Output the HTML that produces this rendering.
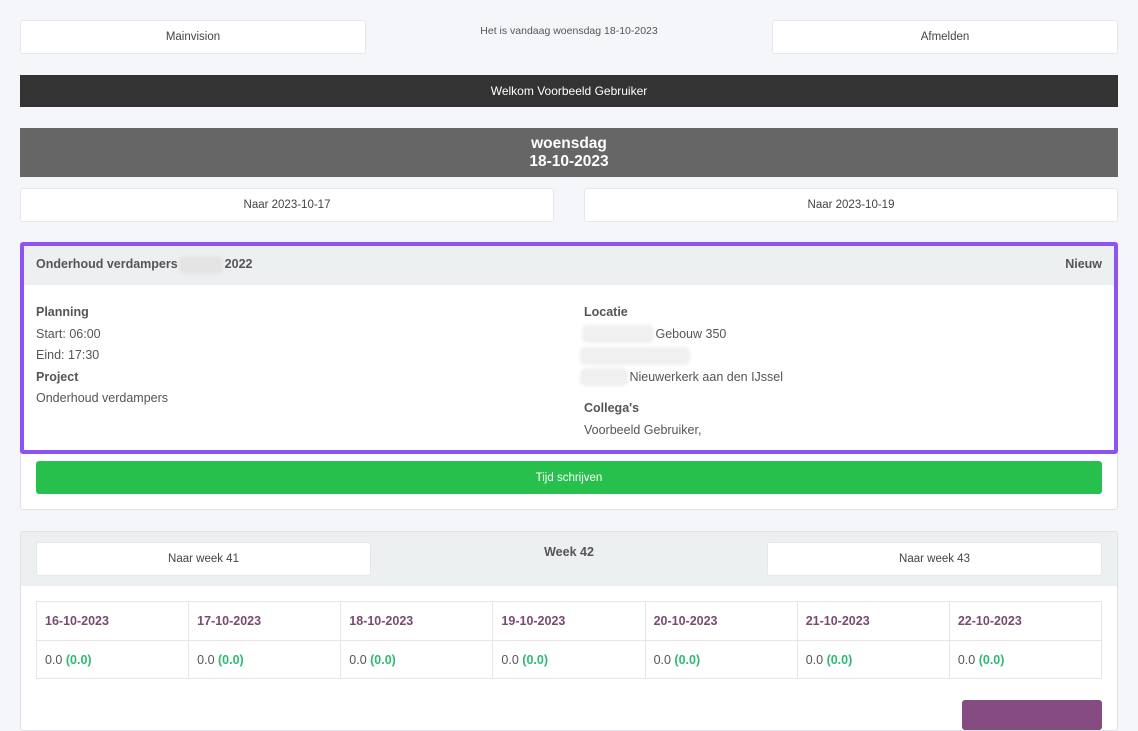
<!DOCTYPE html>
<html><head><meta charset="utf-8"><style>
*{box-sizing:border-box;margin:0;padding:0}
body{width:1138px;height:712px;overflow:hidden;background:#f5f6fa;font-family:"Liberation Sans",sans-serif;color:#555;position:relative}
.a{position:absolute}
.btn{position:absolute;background:#fff;border:1px solid #e5e7ea;border-radius:3px;font-size:11.5px;color:#444;display:flex;align-items:center;justify-content:center}
.b{font-weight:bold}
.t{font-size:12.5px;color:#555}
.blur{display:inline-block;background:#f0f0f0;height:14px;vertical-align:middle;border-radius:3px;box-shadow:0 0 3px 2px #f0f0f0}
td{border:1px solid #e6e6e6;padding:0 8px;font-size:12.5px;width:152px}
.d{color:#7a4a73;font-weight:bold;height:39px}
.v{height:38px}
.g{color:#2fba73;font-weight:600}
</style></head><body>
<div class="btn" style="left:20px;top:20px;width:346px;height:34px">Mainvision</div>
<div class="a" style="left:366px;top:25px;width:406px;text-align:center;font-size:10.5px;color:#555">Het is vandaag woensdag 18-10-2023</div>
<div class="btn" style="left:772px;top:20px;width:346px;height:34px">Afmelden</div>
<div class="a" style="left:20px;top:75px;width:1098px;height:32px;background:#333;color:#fff;font-size:12px;display:flex;align-items:center;justify-content:center">Welkom Voorbeeld Gebruiker</div>
<div class="a b" style="left:20px;top:128px;width:1098px;height:49px;background:#666;color:#fff;font-size:15.5px;text-align:center;line-height:18px;padding-top:7px">woensdag<br>18-10-2023</div>
<div class="btn" style="left:20px;top:188px;width:534px;height:34px">Naar 2023-10-17</div>
<div class="btn" style="left:584px;top:188px;width:534px;height:34px">Naar 2023-10-19</div>

<div class="a" style="left:20px;top:242px;width:1098px;height:268px;background:#fff;border:1px solid #dfe1e4;border-radius:3px"></div>
<div class="a" style="left:20px;top:242px;width:1098px;height:212px;border:4px solid #8f52f6;border-radius:3px;background:#fff"></div>
<div class="a" style="left:24px;top:246px;width:1090px;height:39px;background:#ecf0f1"></div>
<div class="a b t" style="left:36px;top:257px">Onderhoud verdampers <span class="blur" style="width:40px;background:#e4e4e4;box-shadow:0 0 3px 2px #e4e4e4"></span> 2022</div>
<div class="a b t" style="right:36px;top:257px">Nieuw</div>
<div class="a t" style="left:36px;top:302px;line-height:21.5px"><b>Planning</b><br>Start: 06:00<br>Eind: 17:30<br><b>Project</b><br>Onderhoud verdampers</div>
<div class="a t" style="left:584px;top:302px;line-height:21.5px"><b>Locatie</b><br><span class="blur" style="width:68px"></span> Gebouw 350<br><span class="blur" style="width:106px;margin-left:-2px"></span><br><span class="blur" style="width:44px;margin-left:-2px"></span> Nieuwerkerk aan den IJssel</div>
<div class="a t" style="left:584px;top:398px;line-height:21.5px"><b>Collega's</b><br>Voorbeeld Gebruiker,</div>
<div class="a" style="left:36px;top:461px;width:1066px;height:33px;background:#28c04c;border-radius:3px;color:#fff;font-size:11.5px;display:flex;align-items:center;justify-content:center">Tijd schrijven</div>

<div class="a" style="left:20px;top:531px;width:1098px;height:200px;background:#fff;border:1px solid #dfe1e4;border-radius:3px"></div>
<div class="a" style="left:21px;top:532px;width:1096px;height:54px;background:#ecf0f1"></div>
<div class="btn" style="left:36px;top:542px;width:335px;height:34px">Naar week 41</div>
<div class="a b t" style="left:371px;top:545px;width:396px;text-align:center">Week 42</div>
<div class="btn" style="left:767px;top:542px;width:335px;height:34px">Naar week 43</div>
<table class="a" style="left:36px;top:601px;width:1066px;border-collapse:collapse">
<tr><td class="d">16-10-2023</td><td class="d">17-10-2023</td><td class="d">18-10-2023</td><td class="d">19-10-2023</td><td class="d">20-10-2023</td><td class="d">21-10-2023</td><td class="d">22-10-2023</td></tr>
<tr><td class="v">0.0 <span class="g">(0.0)</span></td><td class="v">0.0 <span class="g">(0.0)</span></td><td class="v">0.0 <span class="g">(0.0)</span></td><td class="v">0.0 <span class="g">(0.0)</span></td><td class="v">0.0 <span class="g">(0.0)</span></td><td class="v">0.0 <span class="g">(0.0)</span></td><td class="v">0.0 <span class="g">(0.0)</span></td></tr>
</table>
<div class="a" style="left:962px;top:700px;width:140px;height:30px;background:#864b80;border-radius:3px"></div>
</body></html>
